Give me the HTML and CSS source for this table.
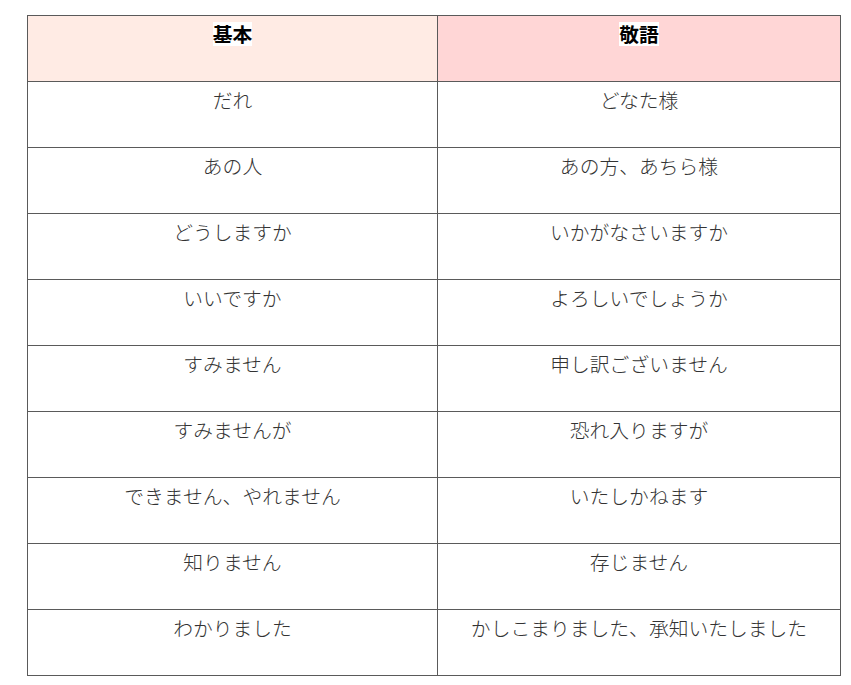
FILE: index.html
```html
<!DOCTYPE html>
<html lang="ja">
<head>
<meta charset="utf-8">
<title>敬語</title>
<link rel="stylesheet" href="styles.css">
</head>
<body>
<div class="wrap">
<table class="keigo">
<thead>
<tr><th class="h-basic"><span class="hl">基本</span></th><th class="h-keigo"><span class="hl">敬語</span></th></tr>
</thead>
<tbody>
<tr><td>だれ</td><td>どなた様</td></tr>
<tr><td>あの人</td><td>あの方、あちら様</td></tr>
<tr><td>どうしますか</td><td>いかがなさいますか</td></tr>
<tr><td>いいですか</td><td>よろしいでしょうか</td></tr>
<tr><td>すみません</td><td>申し訳ございません</td></tr>
<tr><td>すみませんが</td><td>恐れ入りますが</td></tr>
<tr><td>できません、やれません</td><td>いたしかねます</td></tr>
<tr><td>知りません</td><td>存じません</td></tr>
<tr><td>わかりました</td><td>かしこまりました、承知いたしました</td></tr>
</tbody>
</table>
</div>
</body>
</html>
```
FILE: styles.css
```css
html, body {
  margin: 0;
  padding: 0;
  background: #ffffff;
}
.wrap {
  padding: 15px 0 0 27px;
}
.keigo {
  border-collapse: collapse;
  width: 814px;
  table-layout: fixed;
  font-family: "Noto Sans CJK JP", "Noto Sans", sans-serif;
  font-size: 19.8px;
  font-weight: 300;
  color: #333333;
}
.keigo th, .keigo td {
  border: 1px solid #5a5a5a;
  height: 66px;
  padding: 0;
  box-sizing: border-box;
  text-align: center;
  vertical-align: top;
}
.keigo td {
  padding-top: 4px;
  line-height: 28px;
}
.keigo th:first-child, .keigo td:first-child {
  width: 410px;
}
.keigo th {
  padding-top: 6px;
  font-weight: bold;
  color: #000000;
  line-height: 24px;
}
.h-basic { background: #ffebe4; }
.h-keigo { background: #ffd6d6; }
.hl {
  display: inline-block;
  background: #ffffff;
  height: 24px;
  line-height: 24px;
}
```
